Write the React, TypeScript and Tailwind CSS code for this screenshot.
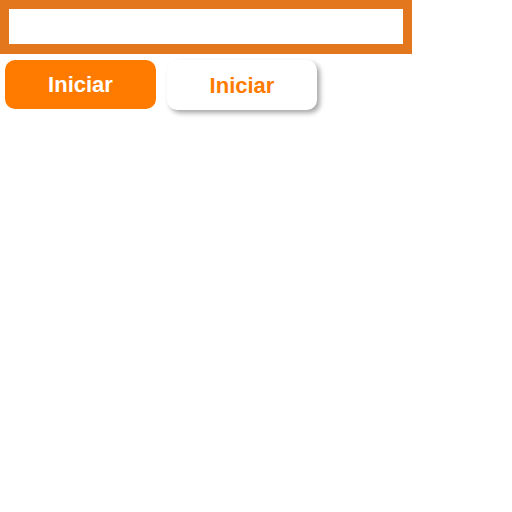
import React from "react";

export default function App() {
  return (
    <div className="w-[512px] h-[512px] bg-white" style={{ fontFamily: '"Liberation Sans", Arial, sans-serif' }}>
      <div className="w-[412px] h-[54px] border-[#e3771d] border-t-[9px] border-l-[9px] border-r-[9px] border-b-[10px] bg-white" />
      <div className="flex pt-[6px] pl-[5px] gap-[11px]">
        <button className="w-[151px] h-[49px] rounded-[10px] bg-[#ff7b00] text-white font-bold text-[22px] flex items-center justify-center">
          Iniciar
        </button>
        <button className="w-[150px] h-[50px] rounded-[10px] bg-white text-[#ff7b00] font-bold text-[22px] flex items-center justify-center shadow-[3px_3px_5px_rgba(0,0,0,0.35)]">
          Iniciar
        </button>
      </div>
    </div>
  );
}
